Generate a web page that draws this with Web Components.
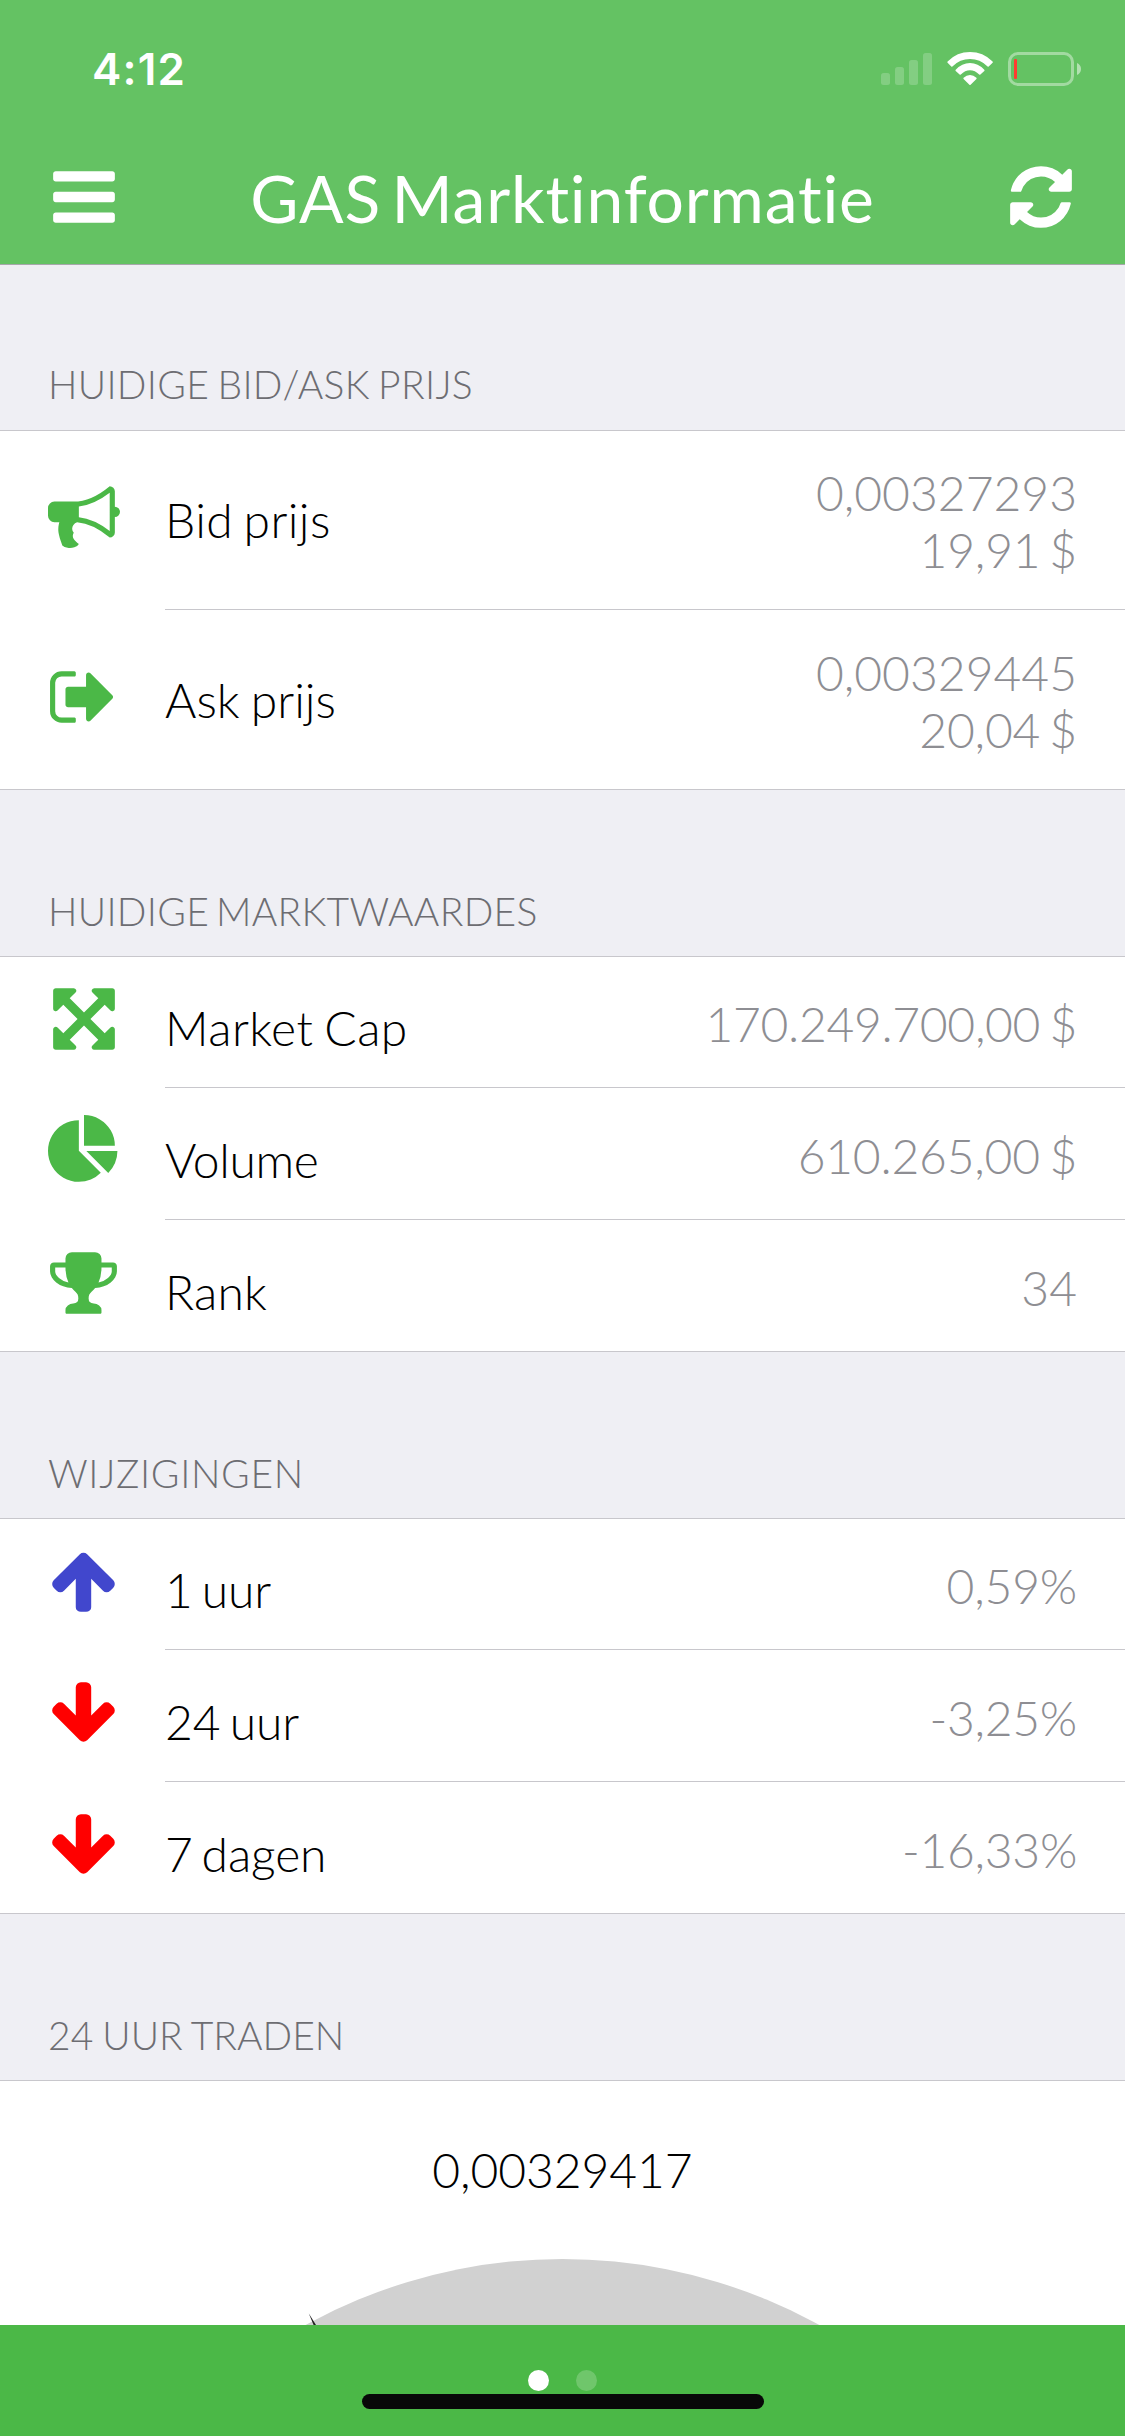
<!DOCTYPE html>
<html lang="nl">
<head>
<meta charset="utf-8">
<title>GAS Marktinformatie</title>
<style>
  html, body { margin: 0; height: 100%; }
  body { width: 1125px; height: 2436px; overflow: hidden; background: #efeff4; font-family: Lato, "Open Sans", sans-serif; font-variant-ligatures: none; }
</style>
</head>
<body>
<market-app></market-app>
<script>
const ICONS = {
  bars: 'M1664 1344v128q0 26-19 45t-45 19h-1408q-26 0-45-19t-19-45v-128q0-26 19-45t45-19h1408q26 0 45 19t19 45zm0-512v128q0 26-19 45t-45 19h-1408q-26 0-45-19t-19-45v-128q0-26 19-45t45-19h1408q26 0 45 19t19 45zm0-512v128q0 26-19 45t-45 19h-1408q-26 0-45-19t-19-45v-128q0-26 19-45t45-19h1408q26 0 45 19t19 45z',
  refresh: 'M1639 1056q0 5-1 7-64 268-268 434.5t-478 166.5q-146 0-282.5-55t-243.5-157l-129 129q-19 19-45 19t-45-19-19-45v-448q0-26 19-45t45-19h448q26 0 45 19t19 45-19 45l-137 137q71 66 161 102t187 36q134 0 250-65t186-179q11-17 53-117 8-23 30-23h192q13 0 22.5 9.5t9.5 22.5zm25-800v448q0 26-19 45t-45 19h-448q-26 0-45-19t-19-45 19-45l138-138q-148-137-349-137-134 0-250 65t-186 179q-11 17-53 117-8 23-30 23h-199q-13 0-22.5-9.5t-9.5-22.5v-7q65-268 270-434.5t480-166.5q146 0 284 55.5t245 156.5l130-129q19-19 45-19t45 19 19 45z',
  bullhorn: 'M1664 640q53 0 90.5 37.5t37.5 90.5-37.5 90.5-90.5 37.5v384q0 52-38 90t-90 38q-417-347-812-380-58 19-91 66t-31 100.5 40 92.5q-20 33-23 65.5t6 58 33.5 55 48 50 61.5 50.5q-29 58-111.5 83t-168.5 11.5-132-55.5q-7-23-29.5-87.5t-32-94.5-23-89-15-101 3.5-98.5 22-110.5h-122q-66 0-113-47t-47-113v-192q0-66 47-113t113-47h480q435 0 896-384 52 0 90 38t38 90v384zm-128 604v-954q-394 302-768 343v270q377 42 768 341z',
  signout: 'M704 1440q0 4 1 20t.5 26.5-3 23.5-10 19.5-20.5 6.5h-320q-119 0-203.5-84.5t-84.5-203.5v-704q0-119 84.5-203.5t203.5-84.5h320q13 0 22.5 9.5t9.5 22.5q0 4 1 20t.5 26.5-3 23.5-10 19.5-20.5 6.5h-320q-66 0-113 47t-47 113v704q0 66 47 113t113 47h312l11.5 1 11.5 3 8 5.5 7 9 2 13.5zm928-544q0 26-19 45l-544 544q-19 19-45 19t-45-19-19-45v-288h-448q-26 0-45-19t-19-45v-384q0-26 19-45t45-19h448v-288q0-26 19-45t45-19 45 19l544 544q19 19 19 45z',
  arrows: 'M1411 541l-355 355 355 355 144-144q29-31 70-14 39 17 39 59v448q0 26-19 45t-45 19h-448q-42 0-59-40-17-39 14-69l144-144-355-355-355 355 144 144q31 30 14 69-17 40-59 40h-448q-26 0-45-19t-19-45v-448q0-42 40-59 39-17 69 14l144 144 355-355-355-355-144 144q-19 19-45 19-12 0-24-5-40-17-40-59v-448q0-26 19-45t45-19h448q42 0 59 40 17 39-14 69l-144 144 355 355 355-355-144-144q-31-30-14-69 17-40 59-40h448q26 0 45 19t19 45v448q0 42-39 59-13 5-25 5-26 0-45-19z',
  pie: 'M768 890l546 546q-106 108-247.5 168t-298.5 60q-209 0-385.5-103t-279.5-279.5-103-385.5 103-385.5 279.5-279.5 385.5-103v762zm187 6h773q0 157-60 298.5t-168 247.5zm709-128h-768v-768q209 0 385.5 103t279.5 279.5 103 385.5z',
  trophy: 'M522 883q-74-162-74-371h-256v96q0 78 94.5 162t235.5 113zm1078-275v-96h-256q0 209-74 371 141-29 235.5-113t94.5-162zm128-128v128q0 71-41.5 143t-112 130-173 97.5-215.5 44.5q-42 54-95 95-38 34-52.5 72.5t-14.5 89.5q0 54 30.5 91t97.5 37q75 0 133.5 45.5t58.5 114.5v64q0 14-9 23t-23 9h-832q-14 0-23-9t-9-23v-64q0-69 58.5-114.5t133.5-45.5q67 0 97.5-37t30.5-91q0-51-14.5-89.5t-52.5-72.5q-53-41-95-95-113-5-215.5-44.5t-173-97.5-112-130-41.5-143v-128q0-40 28-68t68-28h288v-96q0-66 47-113t113-47h576q66 0 113 47t47 113v96h288q40 0 68 28t28 68z',
  up: 'M1675 971q0 51-37 90l-75 75q-38 38-91 38-54 0-90-38l-294-293v704q0 52-37.5 84.5t-90.5 32.5h-128q-53 0-90.5-32.5t-37.5-84.5v-704l-294 293q-36 38-90 38t-90-38l-75-75q-38-38-38-90 0-53 38-91l651-651q35-37 90-37 54 0 91 37l651 651q37 39 37 91z',
  down: 'M1675 832q0 53-37 90l-651 652q-39 37-91 37-53 0-90-37l-651-652q-38-36-38-90 0-53 38-91l74-75q39-37 91-37 53 0 90 37l294 294v-704q0-52 38-90t90-38h128q52 0 90 38t38 90v704l294-294q37-37 90-37 52 0 91 37l75 75q37 39 37 91z'
};
const NARROW = ['signout', 'trophy', 'up', 'down'];

/* Registers a custom element whose shadow root holds the markup render() returns. */
function component(name, render) {
  customElements.define(name, class extends HTMLElement {
    connectedCallback() {
      if (this.shadowRoot) return;
      this.attachShadow({ mode: 'open' }).innerHTML = render(this);
    }
  });
}

/* "letter word" spacing pair, in pixels, turned into declarations. */
const spacing = value => {
  const [letter, word] = (value || '0 0').split(' ');
  return `letter-spacing: ${letter}px; word-spacing: ${word || 0}px;`;
};

component('app-icon', el => `
  <style>
    :host { display: block; width: 72px; height: 72px; flex: none; }
    svg { display: block; fill: currentColor; }
  </style>
  <svg width="72" height="72" viewBox="${NARROW.includes(el.getAttribute('name')) ? 13 : 0} 0 1792 1792"><path d="${ICONS[el.getAttribute('name')]}"/></svg>`);

component('status-bar', () => `
  <style>
    :host { display: flex; justify-content: space-between; box-sizing: border-box; height: 132px; padding: 0 44px 0 92px; color: #fff; }
    .time { font: 600 44px/54px Inter, sans-serif; padding-top: 42px; letter-spacing: 1.2px; }
    svg { display: block; margin-top: 50px; }
  </style>
  <div class="time">4:12</div>
  <svg width="201" height="38" viewBox="880 50 201 38">
    <g fill="#fff" fill-opacity=".2">
      <rect x="881" y="73" width="9" height="12" rx="2.5"/>
      <rect x="895" y="67" width="9" height="18" rx="2.5"/>
      <rect x="909" y="60" width="9" height="25" rx="2.5"/>
      <rect x="923" y="53" width="9" height="32" rx="2.5"/>
    </g>
    <g fill="#fff">
      <path d="M947.6 61.400Q957 52 970 52t22.600 9.400q.6.700 0 1.300l-3.900 3.700q-.5.500-1.100 0Q980 59 970 59t-17.600 7.400q-.6.500-1.100 0l-3.700-3.700q-.6-.6 0-1.300z"/>
      <path d="M955.700 69.700Q962 63 970 63t14.300 6.700q.6.700 0 1.300l-3.900 3.600q-.6.500-1.200 0Q975 70.300 970 70.300t-9.200 4.300q-.6.500-1.200 0l-3.900-3.600q-.6-.6 0-1.300z"/>
      <path d="M963.600 77.700Q966.500 75 970 75t6.400 2.700q.6.600 0 1.300l-5.800 5.800q-.6.500-1.200 0l-5.800-5.800q-.6-.7 0-1.300z"/>
    </g>
    <rect x="1009.500" y="53.500" width="63" height="31" rx="8.500" fill="none" stroke="#fff" stroke-opacity=".4" stroke-width="3"/>
    <path d="M1077 63q4 1.800 4 6t-4 6z" fill="#fff" fill-opacity=".5"/>
    <rect x="1014" y="59" width="3" height="20" rx="1" fill="#ff3b30"/>
  </svg>`);

component('nav-bar', () => `
  <style>
    :host { display: flex; justify-content: space-between; box-sizing: border-box; height: 132px; padding: 0 48px; color: #fff; }
    app-icon { margin-top: 29px; }
    h1 { margin: 0; padding-top: 26px; font-size: 66px; line-height: 80px; font-weight: 400; white-space: nowrap; ${spacing('0.82 -7.3')} }
  </style>
  <app-icon name="bars"></app-icon>
  <h1><slot></slot></h1>
  <app-icon name="refresh"></app-icon>`);

component('list-section', el => `
  <style>
    :host { display: block; }
    h2 { box-sizing: border-box; height: 166px; margin: 0; padding: 97px 48px 0; font-weight: 300; font-size: 39px; line-height: 48px; color: #6d6d72; white-space: nowrap; ${spacing(el.getAttribute('spacing'))} }
    :host(:first-child) h2 { padding-top: 96px; }
    .group { background: #fff; box-shadow: inset 0 1px #c8c7cc; }
  </style>
  <h2>${el.getAttribute('heading')}</h2>
  <div class="group"><slot></slot></div>`);

component('list-row', el => `
  <style>
    :host { display: flex; box-sizing: border-box; height: ${el.hasAttribute('tall') ? 180 : 132}px; padding-left: 48px; }
    :host(:last-child) { box-shadow: inset 0 -1px #c8c7cc; }
    app-icon { margin-top: ${el.hasAttribute('tall') ? 51 : 27}px; color: ${el.getAttribute('tint') || '#4bb847'}; }
    .body { flex: 1; display: flex; justify-content: space-between; margin-left: 45px; padding-right: 48px; box-shadow: inset 0 -1px #c8c7cc; font-size: 48px; font-weight: 300; line-height: 57px; white-space: nowrap; }
    .label { color: #000; padding-top: ${el.hasAttribute('tall') ? 61 : 43}px; ${spacing(el.getAttribute('label-spacing'))} }
    .value { color: #8e8e93; text-align: right; padding-top: ${el.hasAttribute('tall') ? 34 : 39}px; ${spacing(el.getAttribute('value-spacing'))} }
  </style>
  <app-icon name="${el.getAttribute('icon')}"></app-icon>
  <div class="body">
    <div class="label">${el.getAttribute('label')}</div>
    <div class="value"><slot></slot></div>
  </div>`);

component('trade-gauge', el => `
  <style>
    :host { display: block; height: 245px; overflow: hidden; }
    .value { padding-top: 61px; text-align: center; font-size: 48px; font-weight: 300; line-height: 57px; color: #000; letter-spacing: -0.08px; }
    svg { display: block; margin-top: 61px; }
  </style>
  <div class="value">${el.getAttribute('value')}</div>
  <svg width="1125" height="66" viewBox="0 2259 1125 66">
    <circle cx="562.5" cy="2792" r="533" fill="#d1d1d1"/>
    <path d="M308.800 2313.500L316 2325h-2.400z" fill="#222"/>
  </svg>`);

component('pager-bar', () => `
  <style>
    :host { display: flex; flex-direction: column; align-items: center; height: 111px; background: #4bb847; }
    .dots { display: flex; gap: 27px; margin-top: 45px; }
    i { width: 21px; height: 21px; border-radius: 50%; background: #fff; }
    i + i { opacity: .2; }
    .home { width: 402px; height: 15px; border-radius: 7.500px; background: #080808; margin-top: 3px; }
  </style>
  <div class="dots"><i></i><i></i></div>
  <div class="home"></div>`);

component('market-app', () => `
  <style>
    :host { display: block; width: 1125px; height: 2436px; overflow: hidden; }
    header { background: #64c263; height: 264px; box-shadow: 0 1px #a7a7ab; }
  </style>
  <header>
    <status-bar></status-bar>
    <nav-bar>GAS Marktinformatie</nav-bar>
  </header>
  <main>
    <list-section heading="HUIDIGE BID/ASK PRIJS" spacing="0.3 -2.6">
      <list-row tall icon="bullhorn" label="Bid prijs" label-spacing="0.4 -3">0,00327293<br><span style="letter-spacing:-.2px;word-spacing:-3.9px">19,91 $</span></list-row>
      <list-row tall icon="signout" label="Ask prijs" label-spacing="0 -2">0,00329445<br><span style="letter-spacing:-.2px;word-spacing:-3.7px">20,04 $</span></list-row>
    </list-section>
    <list-section heading="HUIDIGE MARKTWAARDES" spacing="0.3 -4.1">
      <list-row icon="arrows" label="Market Cap" label-spacing="0.45 -2.6" value-spacing="-0.33 -3.3">170.249.700,00 $</list-row>
      <list-row icon="pie" label="Volume" label-spacing="-0.35" value-spacing="-0.22 -3.3">610.265,00 $</list-row>
      <list-row icon="trophy" label="Rank" label-spacing="0.2">34</list-row>
    </list-section>
    <list-section heading="WIJZIGINGEN" spacing="0.67">
      <list-row icon="up" tint="#4147cd" label="1 uur" label-spacing="-0.1 -4" value-spacing="-0.2">0,59%</list-row>
      <list-row icon="down" tint="#ff0000" label="24 uur" label-spacing="-0.1 -3.7" value-spacing="-0.3">-3,25%</list-row>
      <list-row icon="down" tint="#ff0000" label="7 dagen" label-spacing="-0.1 -4.1" value-spacing="-0.3">-16,33%</list-row>
    </list-section>
    <list-section heading="24 UUR TRADEN" spacing="0.03 -1.6">
      <trade-gauge value="0,00329417"></trade-gauge>
    </list-section>
  </main>
  <pager-bar></pager-bar>`);
</script>
</body>
</html>
